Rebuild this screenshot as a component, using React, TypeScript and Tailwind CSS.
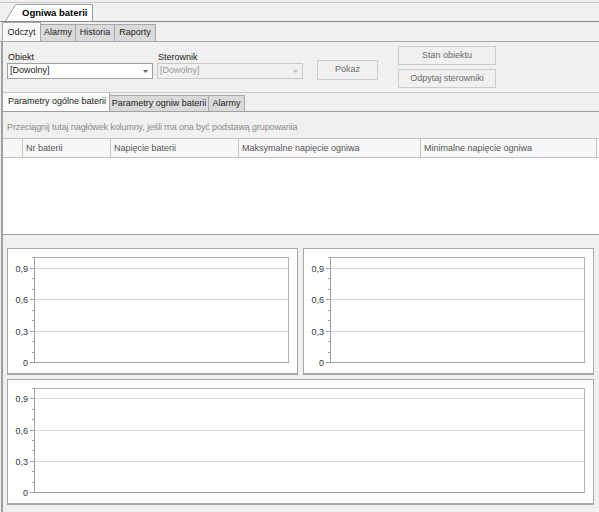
import React from "react";

function Chart({ w, h }: { w: number; h: number }) {
  const x0 = 26;
  const x1 = w - 9;
  const y0 = 8;
  const y1 = h - 11;
  const yv = (v: number) => Math.round(y1 - v * (y1 - y0)) + 0.5;
  const majors = [0.9, 0.6, 0.3, 0];
  const minors = [0.1, 0.2, 0.4, 0.5, 0.7, 0.8, 1.0];
  return (
    <svg width={w} height={h} className="block">
      {majors.slice(0, 3).map((v) => (
        <line key={"g" + v} x1={x0} x2={x1} y1={yv(v)} y2={yv(v)} stroke="#dadada" strokeWidth={1} />
      ))}
      <rect x={x0 + 0.5} y={y0 + 0.5} width={x1 - x0} height={y1 - y0} fill="none" stroke="#b4b4b4" />
      <line x1={x0 + 0.5} x2={x0 + 0.5} y1={y0} y2={y1 + 1} stroke="#a0a0a0" />
      <line x1={x0} x2={x1 + 1} y1={y1 + 0.5} y2={y1 + 0.5} stroke="#a0a0a0" />
      {minors.map((v) => (
        <line key={"m" + v} x1={x0 - 2} x2={x0} y1={yv(v)} y2={yv(v)} stroke="#a0a0a0" />
      ))}
      {majors.map((v) => (
        <g key={"M" + v}>
          <line x1={x0 - 4} x2={x0} y1={yv(v)} y2={yv(v)} stroke="#a0a0a0" />
          <text
            x={x0 - 6}
            y={yv(v) + 3}
            textAnchor="end"
            fontSize={9}
            fill="#333344"
            fontFamily="'Liberation Sans', Arial, sans-serif"
          >
            {v === 0 ? "0" : v.toFixed(1).replace(".", ",")}
          </text>
        </g>
      ))}
    </svg>
  );
}

function Arrow({ color }: { color: string }) {
  return (
    <svg width="5" height="3" className="block">
      <path d="M0 0 L5 0 L2.5 3 Z" fill={color} />
    </svg>
  );
}

export default function App() {
  return (
    <div className="w-[599px] h-[512px] bg-[#f0f0f0] overflow-hidden flex flex-col font-['Liberation_Sans',Arial,sans-serif] text-[9px] text-[#1a1a1a]">
      {/* top document tab strip */}
      <div className="pt-[2px]">
        <div className="h-[20px] border-t border-t-[#c4c4c4] border-b border-b-[#8c8c8c] flex items-end">
          <div className="relative ml-[5px] h-[17px] w-[88px]">
            <svg className="absolute inset-0" width="88" height="17">
              <path d="M0.5 17 L10 1.5 Q11 0.5 12.5 0.5 L87.5 0.5 L87.5 17" fill="#ffffff" stroke="#a0a0a0" />
            </svg>
            <span className="relative block pl-[17px] font-bold text-[9.5px] leading-[17px] text-black">Ogniwa baterii</span>
          </div>
        </div>
      </div>

      {/* sub tabs */}
      <div className="h-[20px] border-b border-[#a8a8a8] flex items-end pl-[2px]">
        <div className="w-[39px] h-[19px] bg-[#fafafa] border-l border-t border-r border-[#a8a8a8] flex items-center justify-center pt-[1px]">Odczyt</div>
        <div className="w-[35px] h-[17px] bg-[#dadada] border-t border-r border-[#a8a8a8] flex items-center justify-center">Alarmy</div>
        <div className="w-[39px] h-[17px] bg-[#dadada] border-t border-r border-[#a8a8a8] flex items-center justify-center">Historia</div>
        <div className="w-[41px] h-[17px] bg-[#dadada] border-t border-r border-[#a8a8a8] flex items-center justify-center">Raporty</div>
      </div>

      {/* main panel */}
      <div className="flex-1 ml-[1px] border-l-2 border-[#a0a0a0] flex flex-col min-h-0">
        {/* filters */}
        <div className="h-[50px] flex pl-[4px] pt-[4px]">
          <div className="w-[146px] mt-[5px] flex flex-col">
            <div className="h-[12px] leading-[12px] pl-[1px]">Obiekt</div>
            <div className="h-[16px] bg-white border border-[#a0a0a0] flex items-center justify-between pl-[2px] pr-[4px]">
              <span>[Dowolny]</span>
              <Arrow color="#606060" />
            </div>
          </div>
          <div className="w-[146px] ml-[4px] mt-[5px] flex flex-col">
            <div className="h-[12px] leading-[12px] pl-[1px]">Sterownik</div>
            <div className="h-[16px] bg-[#f0f0f0] border border-[#c8c8c8] flex items-center justify-between pl-[2px] pr-[4px] text-[#9a9a9a]">
              <span>[Dowolny]</span>
              <Arrow color="#c0c0c0" />
            </div>
          </div>
          <div className="ml-[14px] mt-[14px] w-[61px] h-[20px] border border-[#cccccc] bg-[#f0f0f0] flex items-center justify-center text-[#6a6a6a]">
            Pokaż
          </div>
          <div className="ml-[20px] flex flex-col gap-[4px]">
            <div className="w-[98px] h-[19px] border border-[#cccccc] bg-[#f0f0f0] flex items-center justify-center text-[#6a6a6a]">
              Stan obiektu
            </div>
            <div className="w-[98px] h-[19px] border border-[#cccccc] bg-[#f0f0f0] flex items-center justify-center text-[#6a6a6a]">
              Odpytaj sterowniki
            </div>
          </div>
        </div>

        {/* inner tabs */}
        <div className="h-[20px] border-t border-t-[#c8c8c8] border-b border-b-[#a0a0a0] flex items-end">
          <div className="w-[107px] h-[18px] bg-[#fafafa] border-r border-[#a8a8a8] flex items-center pl-[5px]">
            Parametry ogólne baterii
          </div>
          <div className="w-[99px] h-[16px] bg-[#dadada] border-t border-r border-[#a8a8a8] flex items-center justify-center">
            Parametry ogniw baterii
          </div>
          <div className="w-[36px] h-[16px] bg-[#dadada] border-t border-r border-[#a8a8a8] flex items-center justify-center">
            Alarmy
          </div>
        </div>

        {/* grid */}
        <div className="flex flex-col">
          <div className="h-[26px] flex items-center pt-[6px] pl-[4px] text-[#8a8a8a] tracking-[-0.12px]">
            Przeciągnij tutaj nagłówek kolumny, jeśli ma ona być podstawą grupowania
          </div>
          <div className="h-[20px] border-t border-b border-[#c0c0c0] bg-[#f7f7f7] flex text-[#555555]">
            <div className="w-[20px] border-r border-[#c8c8c8]"></div>
            <div className="w-[88px] border-r border-[#c8c8c8] flex items-center pl-[3px] pt-[1px]">Nr baterii</div>
            <div className="w-[128px] border-r border-[#c8c8c8] flex items-center pl-[3px] pt-[1px]">Napięcie baterii</div>
            <div className="w-[182px] border-r border-[#c8c8c8] flex items-center pl-[3px] pt-[1px]">Maksymalne napięcie ogniwa</div>
            <div className="w-[176px] border-r border-[#c8c8c8] flex items-center pl-[3px] pt-[1px]">Minimalne napięcie ogniwa</div>
            <div className="flex-1"></div>
          </div>
          <div className="h-[77px] bg-white border-b border-[#a0a0a0]"></div>
        </div>

        {/* charts */}
        <div className="flex flex-col pt-[13px] pl-[4px] gap-[4px]">
          <div className="flex gap-[5px]">
            <div className="w-[291px] h-[127px] bg-white border border-[#a8a8a8] border-b-2">
              <Chart w={289} h={124} />
            </div>
            <div className="w-[291px] h-[127px] bg-white border border-[#a8a8a8] border-b-2">
              <Chart w={289} h={124} />
            </div>
          </div>
          <div className="w-[587px] h-[126px] bg-white border border-[#a8a8a8] border-b-2">
            <Chart w={585} h={123} />
          </div>
        </div>
      </div>
    </div>
  );
}
